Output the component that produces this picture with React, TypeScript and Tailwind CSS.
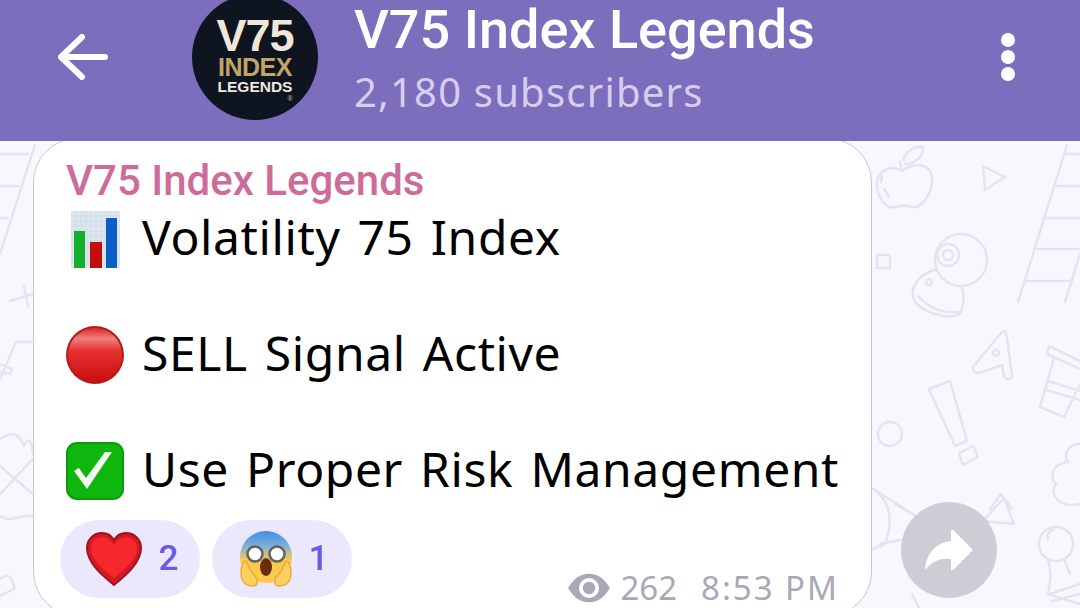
import { ReactNode } from 'react'

const Doodles = () => (
  <svg className="absolute inset-0 h-full w-full" viewBox="0 141 1080 467" fill="none" stroke="#e6e3ee" strokeWidth="2.5" strokeLinecap="round" strokeLinejoin="round">
    {/* left ladder */}
    <path d="M35 141 L0 250 M0 150 H28 M0 182 H18 M0 214 H8" />
    <path d="M10 297 L33 290 M24 282 L28 302" />
    <path d="M0 375 L16 338 H32 M0 360 L12 365 L10 370 L0 368" />
    <path d="M0 435 C14 425 20 432 24 442 C30 430 32 440 33 450 M0 462 L33 490 M0 490 L33 455 M0 512 C14 520 16 510 33 512" />
    <path d="M0 575 C10 565 15 580 14 585 L0 592" />
    {/* apple */}
    <path d="M902 167 C888 158 876 170 877 182 C878 196 888 206 896 203 C902 201 906 201 912 203 C922 205 933 188 932 174 C931 160 916 157 902 167 Z" />
    <path d="M902 167 L900 158 M903 156 C907 146 915 142 923 143 C924 152 915 160 905 160 M882 172 L881 178 M884 185 L889 193" />
    {/* triangle and square */}
    <path d="M983 162 L1005 173 L985 186 Z" />
    <path d="M877 251 H890 V264 H877 Z" />
    {/* webcam */}
    <circle cx="961" cy="256" r="26" />
    <circle cx="948" cy="251" r="11" />
    <circle cx="948" cy="251" r="5" />
    <path d="M937 265 C918 270 908 285 915 298 C925 310 950 316 960 310 C965 300 964 290 962 282" />
    <path d="M918 292 C930 305 945 310 960 308" />
    <circle cx="929" cy="278" r="3" />
    {/* right ladder */}
    <path d="M1067 141 L1018 298 M1080 250 L1065 298 M1066 150 H1080 M1057 182 H1080 M1047 214 H1080 M1037 245 H1080 M1025 277 H1072" />
    {/* A */}
    <path d="M973 363 L1001 329 C1006 325 1006 328 1007 334 L1012 372 C1011 376 1006 376 1004 372 L1002 361 L985 367 C978 371 972 369 973 363 Z" />
    <circle cx="996" cy="349" r="3" />
    {/* cup */}
    <path d="M1049 342 L1080 357 M1049 342 L1047 350 L1080 365 M1054 354 L1040 403 L1064 413 L1080 380 M1048 377 L1080 387 M1046 386 L1080 396" />
    {/* exclamation */}
    <path d="M929 385 L950 377 L967 437 L955 442 Z" />
    <path d="M959 449 L973 442 L978 453 L963 461 Z" />
    <circle cx="890" cy="430" r="12" />
    {/* bottom pieces */}
    <path d="M873 485 L905 505 M990 505 L1001 490 L1012 505" />
    <path d="M1080 440 C1065 440 1064 455 1068 458 C1050 460 1050 475 1056 480 C1048 490 1060 505 1080 500" />
    <path d="M983 517 L1004 494 L1014 520 Z" />
    <path d="M879 490 C890 500 893 520 885 540 L873 545 M895 500 L925 517 L905 535 L880 540" />
    <circle cx="1056" cy="540" r="17" />
    <path d="M1048 535 C1046 530 1050 527 1053 526 M1048 555 C1052 570 1050 580 1048 590 L1080 600 M1064 555 L1070 570 M1050 590 L1080 580 M1052 597 L1080 590" />
    <path d="M912 590 L920 606 H960" />
  </svg>
)

const Logo = () => (
  <div className="-mt-[6px] flex h-[126px] w-[126px] shrink-0 flex-col items-center rounded-full bg-[#0e1420] pt-[23px] font-['Liberation_Sans',sans-serif] font-bold">
    <div className="h-[38px] text-[45px] leading-[38px] tracking-[-1px] text-[#efe8d8]">V75</div>
    <div className="mt-[1px] h-[22px] text-[25px] leading-[22px] tracking-[-0.5px] text-[#c2a468]">INDEX</div>
    <div className="mt-[1px] h-[15px] text-[15.5px] leading-[15px] text-[#efeae0]">LEGENDS</div>
    <div className="mt-[1px] ml-[70px] h-[7px] text-[7px] leading-[7px] font-normal text-[#c9c9c9]">®</div>
  </div>
)

const BarChart = () => (
  <svg width="49" height="57" viewBox="0 0 49 57">
    <rect width="49" height="57" fill="#dde6ee" />
    <path d="M0 5 H49 M0 10 H49 M0 15 H49 M0 20 H49 M0 25 H49 M0 30 H49 M0 35 H49 M0 40 H49 M0 45 H49 M0 50 H49 M5 0 V57 M10 0 V57 M15 0 V57 M20 0 V57 M25 0 V57 M30 0 V57 M35 0 V57 M40 0 V57 M45 0 V57" stroke="#ced9e4" strokeWidth="0.7" />
    <rect x="3" y="20" width="11" height="37" fill="#12b02c" />
    <rect x="19" y="31" width="12" height="26" fill="#c40d0d" />
    <rect x="35" y="7" width="11" height="50" fill="#0b5fc4" />
  </svg>
)

const RedCircle = () => (
  <svg width="60" height="60" viewBox="0 0 60 60">
    <defs>
      <linearGradient id="red" x1="0" y1="0" x2="0" y2="1">
        <stop offset="0" stopColor="#d92a2a" />
        <stop offset="0.2" stopColor="#f08080" />
        <stop offset="0.42" stopColor="#e63030" />
        <stop offset="1" stopColor="#c90f0f" />
      </linearGradient>
    </defs>
    <circle cx="30" cy="30" r="29" fill="#b41a1a" />
    <circle cx="30" cy="30" r="27" fill="url(#red)" />
  </svg>
)

const CheckBox = () => (
  <svg width="60" height="60" viewBox="0 0 60 60">
    <rect x="1" y="1" width="58" height="58" rx="11" fill="#0a9c0a" />
    <rect x="3" y="3" width="54" height="54" rx="9" fill="#0eb60e" />
    <path d="M9 30 L14 27 L21 37 L40 11 H47 L22 48 Z" fill="#f2f8ef" />
  </svg>
)

const Heart = () => (
  <svg width="58" height="56" viewBox="0 0 58 56">
    <path d="M29 54 C18 45 2 32 2 17 C2 8 9 2 17 2 C22 2 26 4 29 9 C32 4 36 2 41 2 C49 2 56 8 56 17 C56 32 40 45 29 54 Z" fill="#d11a24" stroke="#a5101c" strokeWidth="2" />
    <path d="M29 47 C20 39 6 30 6 17 C6 10 11 6 17 6 C23 6 27 10 29 15 C31 10 35 6 41 6 C47 6 52 10 52 17 C52 30 38 39 29 47 Z" fill="#f5282c" />
  </svg>
)

const Scream = () => (
  <svg width="54" height="58" viewBox="0 0 54 58">
    <defs>
      <linearGradient id="face" x1="0" y1="0" x2="0" y2="1">
        <stop offset="0" stopColor="#3f8fe6" />
        <stop offset="0.3" stopColor="#7fb0d8" />
        <stop offset="0.55" stopColor="#fcc94e" />
        <stop offset="1" stopColor="#fcc94e" />
      </linearGradient>
    </defs>
    <circle cx="27" cy="27" r="26" fill="url(#face)" />
    <circle cx="16" cy="24" r="7.5" fill="#fff" stroke="#5f6360" strokeWidth="2.5" />
    <circle cx="38" cy="24" r="7.5" fill="#fff" stroke="#5f6360" strokeWidth="2.5" />
    <ellipse cx="27" cy="37" rx="6" ry="9" fill="#6b2c0c" />
    <path d="M3 36 C0 48 4 56 14 56 C20 56 19 49 15 45 C11 41 9 34 7 31 C4 31 4 33 3 36 Z" fill="#fdcf61" stroke="#f0a83a" strokeWidth="1.5" />
    <path d="M51 36 C54 48 50 56 40 56 C34 56 35 49 39 45 C43 41 45 34 47 31 C50 31 50 33 51 36 Z" fill="#fdcf61" stroke="#f0a83a" strokeWidth="1.5" />
  </svg>
)

const Line = ({ icon, children }: { icon: ReactNode; children: ReactNode }) => (
  <div className="-ml-[1px] flex h-[58px] items-center">
    <div className="flex w-[60px] shrink-0 justify-center">{icon}</div>
    <span className="-mt-[4px] ml-[17px] font-['Noto_Sans',sans-serif] text-[48px] leading-[58px] tracking-[0.6px] [word-spacing:4px] whitespace-nowrap text-black">{children}</span>
  </div>
)

const Reaction = ({ icon, count }: { icon: ReactNode; count: number }) => (
  <div className="flex h-[78px] w-[140px] items-center justify-center gap-[16px] rounded-full bg-[#ebe8fd] pl-[3px]">
    {icon}
    <span className="font-['Roboto',sans-serif] text-[35px] font-medium text-[#6a58e6]">{count}</span>
  </div>
)

export default function App() {
  return (
    <div className="flex h-[608px] w-[1080px] flex-col overflow-hidden bg-[#f9f7fe]">
      <header className="z-10 flex h-[141px] shrink-0 items-start bg-[#7c6dbd]">
        <svg className="mt-[34px] ml-[58px]" width="50" height="46" viewBox="0 0 50 46" fill="none" stroke="#fff" strokeWidth="6" strokeLinecap="round" strokeLinejoin="round">
          <path d="M47 23 H3 M24 3 L3 23 L24 43" />
        </svg>
        <div className="ml-[84px]">
          <Logo />
        </div>
        <div className="ml-[36px] flex flex-col">
          <div className="font-['Roboto',sans-serif] text-[54px] leading-[60px] font-medium whitespace-nowrap text-white">V75 Index Legends</div>
          <div className="mt-[6px] font-['Noto_Sans',sans-serif] text-[40px] leading-[52px] tracking-[1.2px] whitespace-nowrap text-[#d5cfed]">2,180 subscribers</div>
        </div>
        <div className="mt-[33px] mr-[65px] ml-auto flex flex-col gap-[3px]">
          <div className="h-[14px] w-[14px] rounded-full bg-white" />
          <div className="h-[14px] w-[14px] rounded-full bg-white" />
          <div className="h-[14px] w-[14px] rounded-full bg-white" />
        </div>
      </header>
      <main className="relative flex-1 pl-[33px]">
        <Doodles />
        <div className="relative -mt-[3px] h-[478px] w-[839px] rounded-[44px] border border-[#c9c7cf] bg-white pt-[19px] pl-[32px]">
          <div className="font-['Roboto',sans-serif] text-[42px] leading-[46px] font-medium whitespace-nowrap text-[#cd6b9b]">V75 Index Legends</div>
          <div className="mt-[6px] flex flex-col gap-[58px]">
            <Line icon={<BarChart />}>Volatility 75 Index</Line>
            <Line icon={<RedCircle />}>SELL Signal Active</Line>
            <Line icon={<CheckBox />}>Use Proper Risk Management</Line>
          </div>
          <div className="mt-[20px] -ml-[6px] flex gap-[12px]">
            <Reaction icon={<Heart />} count={2} />
            <Reaction icon={<Scream />} count={1} />
          </div>
          <div className="absolute top-[430px] right-[32px] flex items-center font-['Noto_Sans',sans-serif] text-[33px] leading-[38px] text-[#a9a8b6]">
            <svg className="mr-[10px]" width="42" height="30" viewBox="0 0 44 30">
              <path d="M0 15 C6 5 13 0 22 0 C31 0 38 5 44 15 C38 25 31 30 22 30 C13 30 6 25 0 15 Z" fill="#a9a8b6" />
              <circle cx="22" cy="15" r="10.5" fill="#fff" />
              <circle cx="22" cy="15" r="6.5" fill="#a9a8b6" />
            </svg>
            <span>262</span>
            <span className="ml-[24px] tracking-[2px]">8:53 PM</span>
          </div>
        </div>
        {/* share button */}
        <div className="absolute top-[361px] left-[901px] flex h-[96px] w-[96px] items-center justify-center rounded-full bg-[#cfccd6]">
          <svg width="48" height="42" viewBox="0 0 48 42">
            <path d="M28 1 L48 21 L28 41 C26 42 26 41 26 39 V30 C16 29 8 32 2 39 C0 41 0 40 0 38 C3 22 13 13 26 12 V3 C26 1 27 0 28 1 Z" fill="#fff" />
          </svg>
        </div>
      </main>
    </div>
  )
}
